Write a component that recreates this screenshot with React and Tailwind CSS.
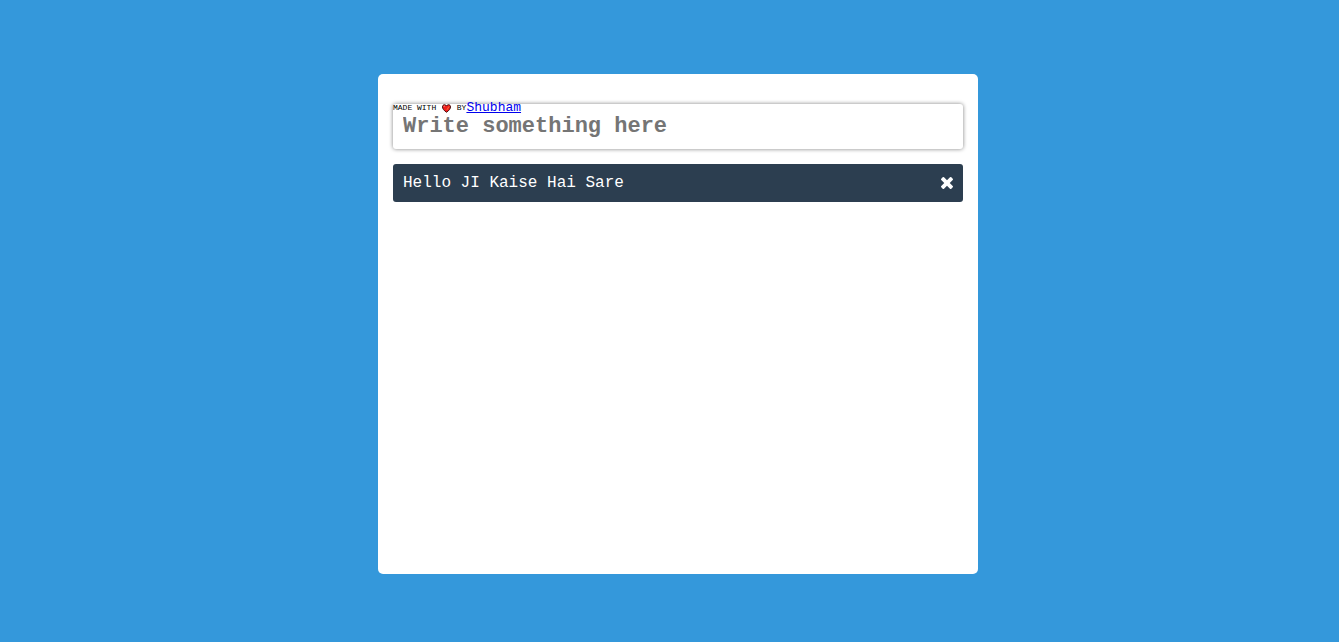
import { useState } from "react";

function Heart() {
  return (
    <svg viewBox="0 0 20 20" className="mx-px size-[9px] shrink-0" role="img" aria-label="love">
      <path
        d="M10 18.5C4 14 1 10.500 1 6.500C1 3.500 3 1.500 5.500 1.500C7.500 1.500 9 2.700 10 4.500C11 2.700 12.500 1.500 14.500 1.500C17 1.500 19 3.500 19 6.500C19 10.500 16 14 10 18.500Z"
        fill="#f01c1c"
        stroke="#3a0a0a"
        strokeWidth="2"
      />
      <path d="M4 6.500C4.300 5 5 4.500 6.300 4.300" stroke="#ff9a8a" strokeWidth="2" fill="none" />
      <path d="M11 13L15.500 5.500" stroke="#f5803a" strokeWidth="2" fill="none" />
    </svg>
  );
}

function Cross() {
  return (
    <svg viewBox="302 302 1188 1188" className="size-3" fill="currentColor" aria-hidden="true">
      <path
        transform="translate(0 -64)"
        d="M1490 1322q0 40-28 68l-136 136q-28 28-68 28t-68-28l-294-294-294 294q-28 28-68 28t-68-28l-136-136q-28-28-28-68t28-68l294-294-294-294q-28-28-28-68t28-68l136-136q28-28 68-28t68 28l294 294 294-294q28-28 68-28t68 28l136 136q28 28 28 68t-28 68l-294 294 294 294q28 28 28 68z"
      />
    </svg>
  );
}

export default function App() {
  const [items, setItems] = useState(["Hello JI Kaise Hai Sare"]);
  const [text, setText] = useState("");

  const addItem = (event) => {
    event.preventDefault();
    if (!text.trim()) return;
    setItems([...items, text.trim()]);
    setText("");
  };

  return (
    <div className="flex min-h-screen items-center justify-center bg-[#3498db] pt-[6px] pl-[17px] font-['Liberation_Mono','Courier_New',monospace]">
      <main className="min-h-[500px] w-full max-w-[600px] rounded-[5px] bg-white px-[15px] pt-[30px] pb-4">
        <form onSubmit={addItem} className="relative">
          <p className="absolute top-0 left-0 flex h-2 items-center text-[8px] whitespace-pre text-black">
            <span>MADE WITH </span>
            <Heart />
            <span> BY</span>
            <a href="#shubham" className="text-[13px] text-[#0000ee] underline">
              Shubham
            </a>
          </p>
          <input
            type="text"
            aria-label="New item"
            placeholder="Write something here"
            value={text}
            onChange={(event) => setText(event.target.value)}
            className="block h-[45px] w-full rounded-[3px] bg-white px-[10px] text-[22px] font-bold text-black shadow-[0_0_4px_#808080] outline-none placeholder:text-[#757575]"
          />
        </form>
        <ul className="mt-[15px] flex flex-col gap-[15px]">
          {items.map((item, index) => (
            <li
              key={index}
              className="flex min-h-[38px] items-center justify-between rounded-[3px] bg-[#2c3e50] px-[10px] text-[16px] text-white"
            >
              <span>{item}</span>
              <button
                type="button"
                aria-label="Remove item"
                onClick={() => setItems(items.filter((_, i) => i !== index))}
                className="cursor-pointer"
              >
                <Cross />
              </button>
            </li>
          ))}
        </ul>
      </main>
    </div>
  );
}
